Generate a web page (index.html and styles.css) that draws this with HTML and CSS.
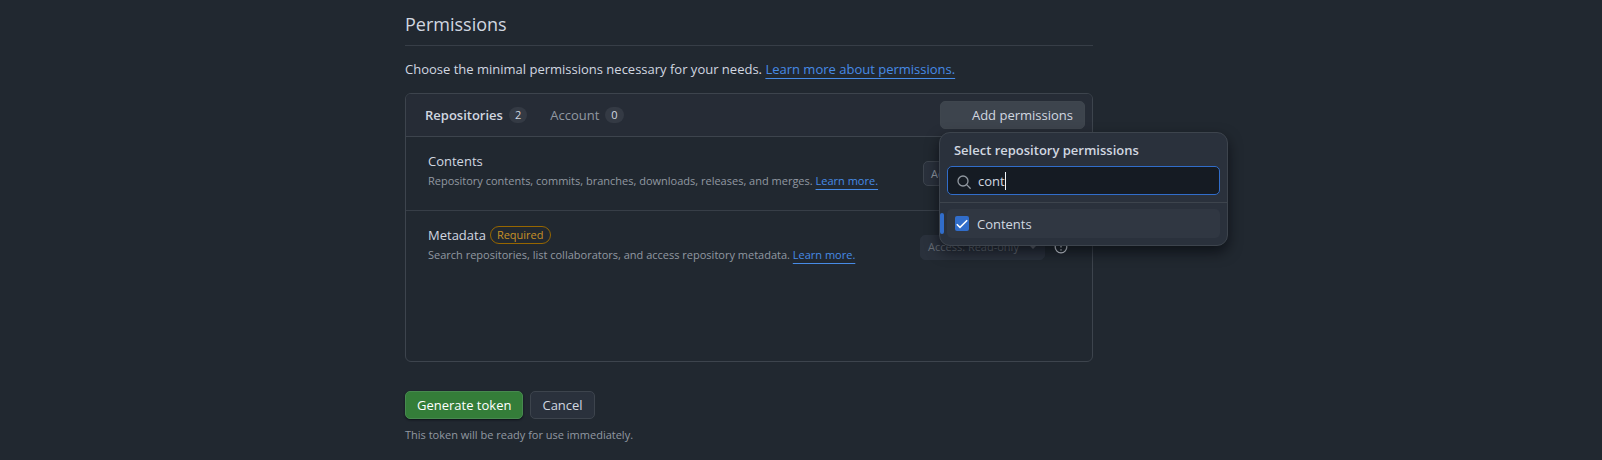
FILE: index.html
```html
<!DOCTYPE html>
<html lang="en">
<head>
<meta charset="utf-8">
<title>Permissions</title>
<link rel="stylesheet" href="styles.css">
</head>
<body>
<main class="page">
  <h2 class="title">Permissions</h2>
  <p class="intro">Choose the minimal permissions necessary for your needs. <a class="link" href="#about">Learn more about permissions.</a></p>

  <section class="panel">
    <header class="panel-head">
      <div class="tabs" role="tablist">
        <button class="tab tab-active" role="tab" aria-selected="true" type="button">Repositories <span class="counter">2</span></button>
        <button class="tab" role="tab" aria-selected="false" type="button">Account <span class="counter">0</span></button>
      </div>
      <div class="add">
        <button class="btn btn-add" type="button" aria-expanded="true">Add permissions</button>
        <div class="popover" role="dialog" aria-labelledby="popover-title">
          <div class="popover-head">
            <h3 class="popover-title" id="popover-title">Select repository permissions</h3>
            <label class="search">
              <svg class="search-icon" viewBox="0 0 14 14" aria-hidden="true"><circle cx="6" cy="6" r="5"/><path d="M9.6 9.6 13.2 13.2"/></svg>
              <input class="search-input" type="text" value="cont" aria-label="Filter permissions">
              <span class="caret"></span>
            </label>
          </div>
          <div class="options">
            <label class="option">
              <input class="check" type="checkbox" checked>
              <svg class="check-mark" viewBox="0 0 14 14" aria-hidden="true"><path d="M1.8 7.2 5 10.4 12.2 3.2"/></svg>
              <span>Contents</span>
            </label>
          </div>
        </div>
      </div>
    </header>

    <ul class="rows">
      <li class="row">
        <div class="row-text">
          <div class="row-name">Contents</div>
          <p class="row-desc">Repository contents, commits, branches, downloads, releases, and merges. <a class="link" href="#contents">Learn more.</a></p>
        </div>
        <div class="row-side">
          <button class="access" type="button">Access: Read-only <span class="arrow"></span></button>
        </div>
      </li>
      <li class="row">
        <div class="row-text">
          <div class="row-name">Metadata <span class="badge">Required</span></div>
          <p class="row-desc">Search repositories, list collaborators, and access repository metadata. <a class="link" href="#metadata">Learn more.</a></p>
        </div>
        <div class="row-side">
          <button class="access access-off" type="button" disabled>Access: Read-only <span class="arrow"></span></button>
          <svg class="info" viewBox="0 0 14 14" aria-hidden="true"><circle cx="7" cy="7" r="5.8"/><path d="M7 3.4V7.6M7 9.2V10.6"/></svg>
        </div>
      </li>
    </ul>
  </section>

  <div class="actions">
    <button class="btn btn-primary" type="submit">Generate token</button>
    <button class="btn" type="button">Cancel</button>
  </div>
  <p class="note">This token will be ready for use immediately.</p>
</main>
</body>
</html>
```
FILE: styles.css
```css
* { box-sizing: border-box; }

body {
  margin: 0;
  padding-right: 104px;
  background: #212830;
  color: #d1d7e0;
  font: 13px/20px "Open Sans", "Noto Sans", sans-serif;
}

button, input { font: inherit; color: inherit; }

h2, h3, p, ul { margin: 0; padding: 0; font-weight: 400; }

.page {
  max-width: 688px;
  margin: 0 auto;
  padding: 10px 0;
}

.title {
  padding-bottom: 7px;
  border-bottom: 1px solid #373e47;
  font-size: 18px;
  line-height: 28px;
}

.intro { margin: 13px 0 14px; }

.link {
  color: #478be6;
  text-decoration: underline;
  text-underline-offset: 4px;
}

.panel {
  min-height: 269px;
  border: 1px solid #3d444d;
  border-radius: 6px;
}

.panel-head {
  display: flex;
  align-items: center;
  justify-content: space-between;
  padding: 7px 7px 7px 19px;
  background: #262c36;
  border-bottom: 1px solid #3d444d;
  border-radius: 5px 5px 0 0;
}

.tabs { display: flex; gap: 23px; }

.tab {
  display: flex;
  align-items: center;
  gap: 6px;
  padding: 0;
  border: 0;
  background: none;
  color: #9198a1;
}

.tab-active { color: #d1d7e0; font-weight: 600; }

.counter {
  min-width: 18px;
  padding: 0 6px;
  border-radius: 8px;
  background: #343a44;
  color: #d1d7e0;
  font-size: 11px;
  font-weight: 500;
  line-height: 16px;
  text-align: center;
}

.btn {
  height: 28px;
  padding: 0 11px;
  border: 1px solid #3d444d;
  border-radius: 5px;
  background: #2a313c;
  font-weight: 500;
}

.btn-add {
  padding-left: 31px;
  border-color: #3f464e;
  background: #3d444d;
}

.btn-primary {
  border-color: #47894f;
  background: #347d39;
  color: #fff;
  box-shadow: 0 1px 2px #0d1117;
}

.add { position: relative; }

.popover {
  position: absolute;
  z-index: 1;
  top: 31px;
  left: -1px;
  width: 289px;
  border: 1px solid #3d444d;
  border-radius: 11px;
  background: #2a313c;
  box-shadow: 0 6px 14px rgba(1, 4, 9, 0.6);
}

.popover-head { padding: 7px; border-bottom: 1px solid #3d444d; }

.popover-title {
  padding: 0 7px;
  font-size: 13px;
  font-weight: 600;
  line-height: 20px;
}

.search {
  display: flex;
  align-items: center;
  height: 29px;
  margin-top: 6px;
  padding: 0 9px;
  border: 1px solid #316dca;
  border-radius: 5px;
  background: #151b23;
}

.search-icon {
  width: 14px;
  height: 14px;
  margin: 3px 7px 0 0;
  fill: none;
  stroke: #9198a1;
  stroke-width: 1.3;
  stroke-linecap: round;
}

.search-input {
  field-sizing: content;
  min-width: 0;
  padding: 0;
  border: 0;
  outline: 0;
  background: none;
}

.caret { width: 1px; height: 18px; background: #f0f6fc; }

.options { padding: 6px 7px 7px; }

.option {
  position: relative;
  display: flex;
  align-items: center;
  gap: 8px;
  height: 29px;
  padding: 0 8px;
  border-radius: 5px;
  background: #303742;
}

.option::before {
  content: "";
  position: absolute;
  left: -7px;
  width: 4px;
  height: 21px;
  border-radius: 2px;
  background: #316dca;
}

.check {
  appearance: none;
  width: 14px;
  height: 15px;
  margin: 0;
  border-radius: 2px;
  background: #316dca;
}

.check-mark {
  position: absolute;
  left: 8px;
  width: 14px;
  height: 14px;
  fill: none;
  stroke: #fff;
  stroke-width: 1.5;
}

.rows { list-style: none; }

.row {
  display: flex;
  align-items: center;
  justify-content: space-between;
  height: 73px;
  padding: 0 24px 0 22px;
}

.row + .row { border-top: 1px solid #373e47; }

.row-text { padding-bottom: 5px; }

.row-name {
  display: flex;
  align-items: center;
  gap: 4px;
  font-weight: 500;
  line-height: 20px;
}

.row-desc { color: #9198a1; font-size: 11px; line-height: 20px; }

.badge {
  padding: 0 6px;
  border: 1px solid #966600;
  border-radius: 9px;
  color: #c69026;
  font-size: 11px;
  font-weight: 400;
  line-height: 16px;
}

.row-side {
  display: grid;
  grid-template-columns: 125px 14px;
  gap: 9px;
  align-items: center;
  justify-items: end;
}

.access {
  display: flex;
  align-items: center;
  justify-content: space-between;
  width: 122px;
  height: 25px;
  padding: 0 7px;
  border: 1px solid #3d444d;
  border-radius: 5px;
  background: #2a313c;
  color: #9198a1;
  font-size: 11px;
  font-weight: 500;
}

.access-off { width: 125px; border-color: #2a313c; color: #656c76; }

.arrow {
  border: 4px solid transparent;
  border-top-color: currentColor;
  border-bottom: 0;
}

.info {
  width: 14px;
  height: 14px;
  fill: none;
  stroke: #d1d7e0;
  stroke-width: 1.3;
}

.actions { display: flex; gap: 7px; margin-top: 29px; }

.note {
  margin-top: 6px;
  color: #9198a1;
  font-size: 11px;
  line-height: 20px;
}
```
